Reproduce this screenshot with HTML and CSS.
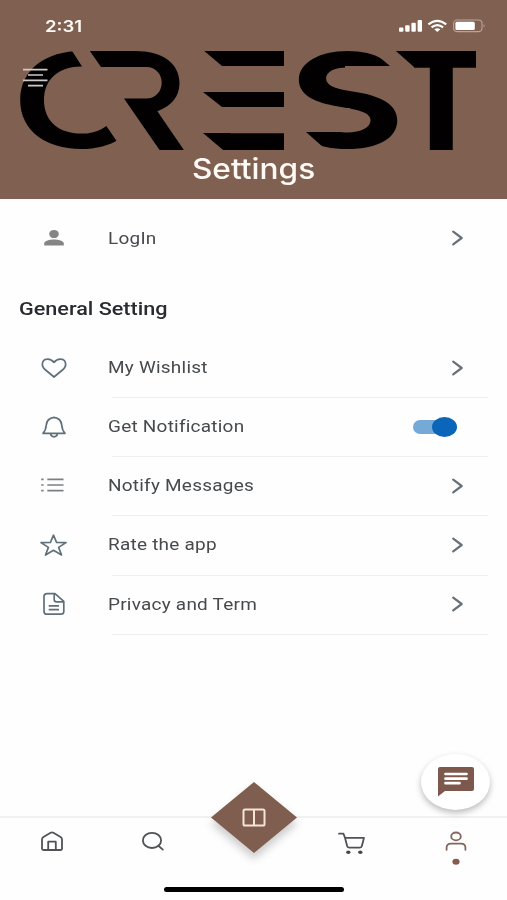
FILE: index.html
```html
<!DOCTYPE html>
<html lang="en">
<head>
<meta charset="utf-8">
<title>Settings</title>
<link rel="stylesheet" href="styles.css">
</head>
<body>
<div class="app">
  <header class="header">
    <div class="status">
      <span class="time">2:31</span>
      <svg class="indicators" width="88" height="14" viewBox="0 0 88 14">
        <g fill="#fff"><rect x="0" y="8.5" width="4.4" height="4.3" rx="1"/><rect x="6.2" y="6.3" width="4.4" height="6.5" rx="1"/><rect x="12.4" y="3.8" width="4.4" height="9" rx="1"/><rect x="18.6" y="1" width="4.4" height="11.8" rx="1"/></g>
        <g fill="none" stroke="#fff" stroke-width="2.1"><path d="M29.4 5.4Q38.3-1.8 47.2 5.4"/><path d="M32.5 8.4Q38.3 3.8 44.1 8.4"/></g>
        <path d="M35.3 10.3q3-2 6 0l-3 2.6z" fill="#fff"/>
        <rect x="54.6" y="1" width="28.4" height="11.6" rx="3.5" fill="none" stroke="#b9a49b" stroke-width="1.1"/>
        <rect x="56.4" y="2.7" width="19.4" height="8.2" rx="1.5" fill="#fff"/>
        <path d="M84.6 5q2 1.8 0 3.7z" fill="#b9a49b"/>
      </svg>
    </div>
    <div class="brand">
      <svg class="wordmark" width="507" height="110" viewBox="0 44 507 110">
        <defs>
          <clipPath id="cut-c"><path d="M0 40H65L83 68 70 100 105 124 120 146V155H0z"/></clipPath>
          <clipPath id="cut-r"><path d="M85 44H200V155H163L124 98.500H146C167 98.500 167 67 146 67H101z"/></clipPath>
          <clipPath id="cut-e"><path d="M196 44H284V66H222zM203 92H284V107H222zM203 133H284V155H229z"/></clipPath>
          <clipPath id="cut-s"><path d="M290 44H364L390 66H345V90H420V155H332L306 132H350V108H290z"/></clipPath>
          <clipPath id="cut-t"><path d="M388 44H476V155H414V67z"/></clipPath>
        </defs>
        <g clip-path="url(#cut-c)"><text class="light" transform="translate(11 148) scale(1.34 .97)">C</text></g>
        <g clip-path="url(#cut-r)"><text transform="translate(75 149.5) scale(1.26 1)">R</text></g>
        <g clip-path="url(#cut-e)"><text transform="translate(188 149.5) scale(1.45 1)">E</text></g>
        <g clip-path="url(#cut-s)"><text transform="translate(288 148) scale(1.31 .97)">S</text></g>
        <g clip-path="url(#cut-t)"><text transform="translate(390 149.5) scale(1.13 1)">T</text></g>
      </svg>
      <svg class="menu" width="28" height="22" viewBox="0 0 28 22" stroke="#cfc9c5" stroke-width="1.7"><path d="M1 2.6H25.5M6 8H21M1 13.3H25.5M6 18.6H21"/></svg>
    </div>
    <h1><span>Settings</span></h1>
  </header>

  <main>
    <div class="row login">
      <svg class="icon" width="28" height="28" viewBox="0 0 28 28"><ellipse cx="14" cy="10" rx="4.8" ry="4.1"/><path d="M4.2 21.6V19.5C4.2 16.7 10 15.4 14 15.4S23.8 16.7 23.8 19.5V21.6z"/></svg>
      <span class="label">LogIn</span>
      <svg class="chev" width="14" height="18" viewBox="0 0 14 18"><path d="M2.2 2.7L10.7 9 2.2 15.3"/></svg>
    </div>
    <h2><span>General Setting</span></h2>
    <div class="row">
      <svg class="icon" width="28" height="28" viewBox="0 0 28 28"><path d="M14 23L5 15.5C.5 11.5 2.2 5.4 7.2 5.2 10.6 4.9 12.5 6.6 14 8.4 15.5 6.6 17.4 4.9 20.8 5.2 25.8 5.4 27.5 11.5 23 15.5z"/></svg>
      <span class="label">My Wishlist</span>
      <svg class="chev" width="14" height="18" viewBox="0 0 14 18"><path d="M2.2 2.7L10.7 9 2.2 15.3"/></svg>
    </div>
    <div class="row">
      <svg class="icon" width="28" height="28" viewBox="0 0 28 28"><path d="M3 20.3H25C22.8 18 22.1 15.8 21.7 12 21.3 7.8 18.6 5 14 4.4 9.4 5 6.7 7.8 6.3 12 5.9 15.8 5.2 18 3 20.3zM10.5 20.7Q11 23.8 14 23.8T17.5 20.7"/></svg>
      <span class="label">Get Notification</span>
      <span class="toggle"></span>
    </div>
    <div class="row">
      <svg class="icon list" width="28" height="28" viewBox="0 0 28 28"><path d="M7.3 7.4H23.5M7.3 13H23.5M7.3 18.6H23.5M1.2 7.4H3.6M1.2 13H3.6M1.2 18.6H3.6"/></svg>
      <span class="label">Notify Messages</span>
      <svg class="chev" width="14" height="18" viewBox="0 0 14 18"><path d="M2.2 2.7L10.7 9 2.2 15.3"/></svg>
    </div>
    <div class="row">
      <svg class="icon" width="28" height="28" viewBox="0 0 28 28"><path d="M13.5 4.2L16.6 11.5 26 11.6 18.6 16.4 21.5 24 13.5 19.3 5.5 24 8.4 16.4 1 11.6 10.4 11.5z"/></svg>
      <span class="label">Rate the app</span>
      <svg class="chev" width="14" height="18" viewBox="0 0 14 18"><path d="M2.2 2.7L10.7 9 2.2 15.3"/></svg>
    </div>
    <div class="row">
      <svg class="icon" width="28" height="28" viewBox="0 0 28 28"><path d="M7 3.7H15L23.8 11.4V21.5Q23.8 24.2 20.8 24.2H7Q4 24.2 4 21.5V6.4Q4 3.7 7 3.7zM14.2 3.7V9.8Q14.2 11.8 16.5 11.8H23.5M8.7 15.8H19M8.7 19.6H19"/></svg>
      <span class="label">Privacy and Term</span>
      <svg class="chev" width="14" height="18" viewBox="0 0 14 18"><path d="M2.2 2.7L10.7 9 2.2 15.3"/></svg>
    </div>
  </main>

  <footer class="tabbar">
    <nav class="tabs">
      <svg width="28" height="28" viewBox="0 0 28 28"><path d="M4 11.5Q4 10 5.4 9L12.6 4.8Q14 4 15.4 4.8L22.6 9Q24 10 24 11.5V20.4Q24 22 22 22H6Q4 22 4 20.4zM10.2 22V13.7H17.8V22"/></svg>
      <svg width="28" height="28" viewBox="0 0 28 28"><ellipse cx="14" cy="12.4" rx="9.1" ry="7.6"/><path d="M20.4 17.8L24.8 21.6"/></svg>
      <svg width="30" height="28" viewBox="0 0 30 28"><path d="M2 5.7H6.4L8 9.7 10.2 18.2Q10.6 19.6 12.4 19.6H22.6Q24.4 19.6 24.8 18.2L27 9.8H8"/><ellipse class="solid" cx="11.3" cy="24.2" rx="2.2" ry="1.8"/><ellipse class="solid" cx="23.3" cy="24.2" rx="2.2" ry="1.8"/></svg>
      <svg class="active" width="28" height="36" viewBox="0 0 28 36"><ellipse cx="14" cy="8.4" rx="4.8" ry="3.9"/><path d="M4.6 21.8V19.6Q4.6 15.7 9.2 15.7H18.8Q23.4 15.7 23.4 19.6V21.8"/><ellipse class="dot" cx="14" cy="33.8" rx="3.6" ry="3"/></svg>
    </nav>
    <svg class="diamond" width="106" height="96" viewBox="0 0 106 96"><path class="face" d="M53 6L96 41.5 53 77 10 41.5z"/><path class="book" d="M44 33.4H62Q63.5 33.4 63.5 35V48Q63.5 49.6 62 49.6H44Q42.5 49.6 42.5 48V35Q42.5 33.4 44 33.4zM53 33.4V49.6"/></svg>
    <span class="home-indicator"></span>
  </footer>
  <div class="chat">
    <svg width="38" height="32" viewBox="0 0 38 32"><path d="M3 1H35Q37 1 37 3V23Q37 25 35 25H8L1 30.500V3Q1 1 3 1z" fill="#7d594d"/><path d="M8.500 8H29.500M8.500 12.700H29.500M8.500 17.200H22.500" stroke="#fff" stroke-width="2.7" stroke-linecap="round"/></svg>
  </div>
</div>
</body>
</html>
```
FILE: styles.css
```css
* { box-sizing: border-box; }
body { margin: 0; background: #fefefe; font-family: Roboto, "Liberation Sans", sans-serif; }
.app { position: relative; width: 507px; height: 900px; display: flex; flex-direction: column; overflow: hidden; }

.header { height: 199px; background: #806051; color: #fffaf5; }
.status { height: 44px; padding: 19px 19px 0 45px; display: flex; justify-content: space-between; align-items: flex-start; }
.time { font: 600 16px/14px Inter, sans-serif; transform: scaleX(1.16); transform-origin: left; }
.indicators { display: block; margin-right: 1px; }
.brand { position: relative; height: 110px; }
.wordmark { display: block; overflow: visible; }
.wordmark text { font: 700 136px Inter, sans-serif; fill: #020000; }
.wordmark .light { font-weight: 600; }
.menu { position: absolute; left: 22px; top: 23px; fill: none; }
h1 { margin: 0; font: 500 28px/30px Inter, sans-serif; text-align: center; }
h1 span { display: inline-block; transform: scaleX(1.13); }

main { flex: 1; }
.row { position: relative; height: 59.15px; padding: 0 42px 0 40px; display: flex; align-items: center; }
.row:not(.login)::after { content: ""; position: absolute; left: 112px; right: 19px; bottom: -1px; height: 1px; background: #eeefef; }
.login { height: 78px; }
.icon { flex: none; margin-right: 40px; fill: none; stroke: #60707a; stroke-width: 1.7; stroke-linejoin: round; }
.login .icon { stroke: none; fill: #858585; }
.icon.list { stroke: #7c8082; }
.label { flex: 1; padding-top: 1px; color: #474a4d; font-size: 16px; line-height: 20px; letter-spacing: .2px; transform: scaleX(1.185); transform-origin: left; }
.chev { fill: none; stroke: #687078; stroke-width: 2.2; stroke-linecap: round; stroke-linejoin: round; }
h2 { height: 61px; margin: 0; padding: 22px 0 0 19px; color: #292b30; font-size: 18px; font-weight: 500; line-height: 20px; }
h2 span { display: inline-block; transform: scaleX(1.2); transform-origin: left; }
.toggle { position: relative; width: 40px; height: 14px; margin-right: 12px; border-radius: 7px; background: #74a9d8; }
.toggle::after { content: ""; position: absolute; right: -4px; top: -3px; width: 25px; height: 20px; border-radius: 50%; background: #0b65b8; }

.tabbar { position: relative; height: 84px; border-top: 2px solid #f1f1f1; }
.tabs { display: flex; justify-content: space-between; padding: 10px 37px 0 38px; }
.tabs svg { display: block; overflow: visible; fill: none; stroke: #505256; stroke-width: 1.8; stroke-linecap: round; stroke-linejoin: round; }
.tabs svg:nth-child(2) { margin-left: -25px; margin-right: 69px; }
.tabs svg:nth-child(3) { margin-left: 5px; margin-right: -22px; }
.tabs .solid { fill: #46484c; stroke: none; }
.tabs .active { stroke: #85665b; }
.tabs .dot { fill: #85594c; stroke: none; }
.diamond { position: absolute; left: 201px; top: -42px; overflow: visible; filter: drop-shadow(0 6px 4px #0003); }
.face { fill: #7f5e50; }
.book { fill: none; stroke: #f5e5d5; stroke-width: 2; }
.home-indicator { position: absolute; left: 164px; top: 69px; width: 180px; height: 5px; border-radius: 3px; background: #000; }
.chat { position: absolute; left: 421px; top: 754px; width: 69px; height: 56px; border-radius: 50%; background: #fff; box-shadow: 0 3px 6px #0004; display: flex; align-items: center; justify-content: center; }
```
